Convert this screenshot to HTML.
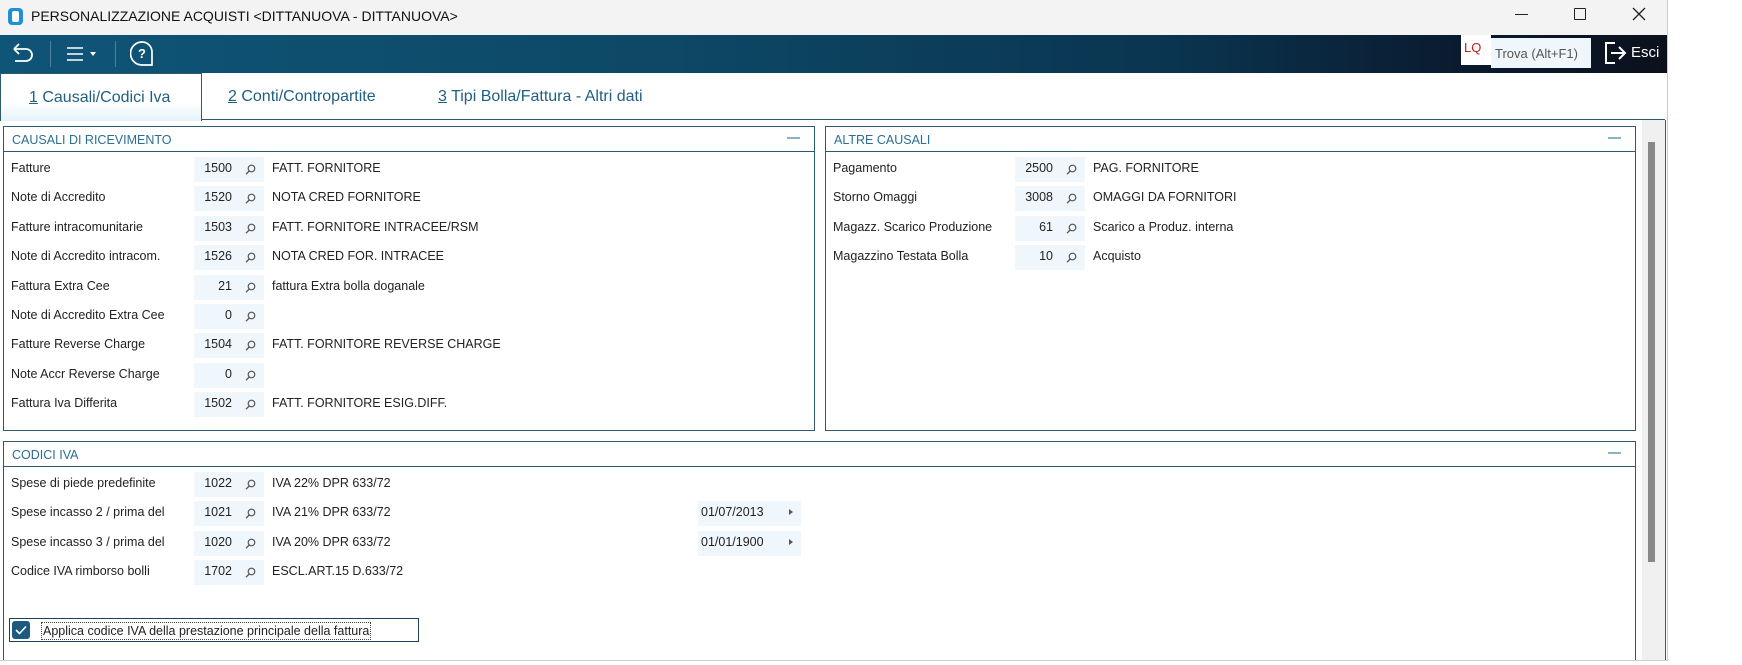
<!DOCTYPE html>
<html><head><meta charset="utf-8"><style>
*{margin:0;padding:0;box-sizing:border-box}
body{width:1742px;height:665px;background:#fff;font-family:"Liberation Sans",sans-serif;font-size:13px;color:#222;position:relative;overflow:hidden}
.abs{position:absolute}
.win{left:0;top:0;width:1668px;height:661px;border-right:1px solid #ccc;border-bottom:1px solid #ccc;background:#fff;overflow:hidden}
.title{left:0;top:0;width:1668px;height:35px;background:#f3f3f3}
.tb{left:0;top:35px;width:1668px;height:38px;background:linear-gradient(90deg,#0f5578 0%,#0d4866 40%,#0a3550 70%,#0a1a2e 88%,#0b111c 100%)}
.panel{border:1px solid #2d5a73;background:#fff}
.ph{position:absolute;left:0;top:0;right:0;height:25px;border-bottom:1px solid #2d5a73;color:#2a6f92;font-size:12.5px;padding:6px 0 0 8px}
.ph i{position:absolute;right:14px;top:10px;width:13px;height:2px;background:#8ab3c7}
.lbl{position:absolute;font-size:12.5px}
.fld{position:absolute;width:70px;height:25px;background:#f0f7fc;text-align:right;padding:4px 32px 0 0;font-size:12.5px}
.fld svg{position:absolute;right:8px;top:7px}
.desc{position:absolute;font-size:12.5px}
.tab{top:73px;height:47px;font-size:16px;color:#1f5f80;padding-top:15px}
.tab u{text-decoration:underline}
</style></head><body>
<div class="abs win">
<div class="abs title">
 <div class="abs" style="left:8px;top:8px;width:15px;height:17px;background:#1f8fd6;border-radius:4px"><div style="margin:3px 0 0 4px;width:7px;height:11px;background:#fff;border-radius:2px"></div></div>
 <div class="abs" style="left:31px;top:8px;font-size:14px;color:#111">PERSONALIZZAZIONE ACQUISTI &lt;DITTANUOVA - DITTANUOVA&gt;</div>
 <div class="abs" style="left:1515px;top:14px;width:13px;height:1px;background:#222"></div>
 <div class="abs" style="left:1574px;top:8px;width:12px;height:12px;border:1.3px solid #222;border-radius:1px"></div>
 <svg class="abs" style="left:1632px;top:7px" width="14" height="14"><path d="M1 1L13 13M13 1L1 13" stroke="#222" stroke-width="1.3"/></svg>
</div>
<div class="abs tb">
 <svg class="abs" style="left:10px;top:7px" width="26" height="24"><path d="M4 7h12a6 6 0 0 1 0 12H5M4 7l5-5M4 7l5 5" fill="none" stroke="#fff" stroke-width="1.8"/></svg>
 <div class="abs" style="left:50px;top:6px;width:1px;height:26px;background:#4f7f9a"></div>
 <svg class="abs" style="left:66px;top:11px" width="36" height="16"><path d="M1 2h16M1 8h16M1 14h16" stroke="#fff" stroke-width="1.6"/><path d="M24 6h6l-3 4z" fill="#fff"/></svg>
 <div class="abs" style="left:115px;top:6px;width:1px;height:26px;background:#4f7f9a"></div>
 <svg class="abs" style="left:130px;top:5px" width="26" height="28"><path d="M12 2a10 10 0 0 1 10 10v13H12A10 10 0 0 1 12 2z" fill="none" stroke="#fff" stroke-width="1.7"/><text x="8" y="18" font-size="13" fill="#fff" font-family="Liberation Sans" font-weight="bold">?</text></svg>
 <div class="abs" style="left:1461px;top:0;width:30px;height:30px;background:#fff;color:#c41d1d;font-size:13px;padding:5px 0 0 3px">LQ</div>
 <div class="abs" style="left:1491px;top:3px;width:100px;height:30px;background:#f0f7fc;color:#555;font-size:13px;padding:8px 0 0 4px">Trova (Alt+F1)</div>
 <svg class="abs" style="left:1603px;top:5px" width="24" height="26"><path d="M12 3H3v20h9" fill="none" stroke="#fff" stroke-width="2"/><path d="M8 13h14M16 7l6 6-6 6" fill="none" stroke="#fff" stroke-width="2"/></svg>
 <div class="abs" style="left:1631px;top:9px;color:#fff;font-size:15px">Esci</div>
</div>
<div class="abs" style="left:0;top:119px;width:1665px;height:1px;background:#2d5a73"></div>
<div class="abs tab" style="left:0;width:202px;border:1px solid #2d5a73;border-bottom:none;background:linear-gradient(#fff 60%,#e6f2fa);padding-left:28px;height:48px"><u>1</u> Causali/Codici Iva</div>
<div class="abs tab" style="left:228px"><u>2</u> Conti/Contropartite</div>
<div class="abs tab" style="left:438px"><u>3</u> Tipi Bolla/Fattura - Altri dati</div>
<div class="abs" style="left:1642px;top:120px;width:23px;height:540px;background:#f0f0f0"></div>
<div class="abs" style="left:1648px;top:142px;width:7px;height:420px;background:#888"></div>
<div class="abs" style="left:1665px;top:120px;width:1px;height:540px;background:#2d5a73"></div>

<div class="abs panel" style="left:3px;top:126px;width:812px;height:305px"><div class="ph">CAUSALI DI RICEVIMENTO<i></i></div></div>
<div class="abs panel" style="left:825px;top:126px;width:811px;height:305px"><div class="ph">ALTRE CAUSALI<i></i></div></div>
<div class="abs panel" style="left:3px;top:441px;width:1633px;height:230px"><div class="ph">CODICI IVA<i></i></div></div>

<div id="rows"></div>
<div class="abs" style="left:9px;top:618px;width:410px;height:24px;border:1px solid #1f3f55"></div>
<div class="abs" style="left:12px;top:621px;width:18px;height:18px;background:#1d5a80;border-radius:3px"><svg width="18" height="18"><path d="M4 9l3.5 3.5L14 5.5" fill="none" stroke="#fff" stroke-width="1.6"/></svg></div>
<div class="abs" style="left:41px;top:622px;font-size:12.5px;border:1px dotted #444;padding:1px 1px">Applica codice IVA della prestazione principale della fattura</div>
</div>
<script>
const mag='<svg width="11" height="11"><circle cx="6.5" cy="4.5" r="3.3" fill="none" stroke="#555" stroke-width="1.2"/><path d="M4.2 7L1 10.2" stroke="#555" stroke-width="1.3"/></svg>';
let h='';
function row(x,fx,dx,y,l,n,d){h+=`<div class="lbl" style="left:${x}px;top:${y-8}px">${l}</div><div class="fld" style="left:${fx}px;top:${y-12}px">${n}${mag}</div><div class="desc" style="left:${dx}px;top:${y-8}px">${d}</div>`;}
const A=[["Fatture","1500","FATT. FORNITORE"],["Note di Accredito","1520","NOTA CRED FORNITORE"],["Fatture intracomunitarie","1503","FATT. FORNITORE INTRACEE/RSM"],["Note di Accredito intracom.","1526","NOTA CRED FOR. INTRACEE"],["Fattura Extra Cee","21","fattura Extra bolla doganale"],["Note di Accredito Extra Cee","0",""],["Fatture Reverse Charge","1504","FATT. FORNITORE REVERSE CHARGE"],["Note Accr Reverse Charge","0",""],["Fattura Iva Differita","1502","FATT. FORNITORE ESIG.DIFF."]];
A.forEach((r,i)=>row(11,194,272,169+i*29.4,...r));
const B=[["Pagamento","2500","PAG. FORNITORE"],["Storno Omaggi","3008","OMAGGI DA FORNITORI"],["Magazz. Scarico Produzione","61","Scarico a Produz. interna"],["Magazzino Testata Bolla","10","Acquisto"]];
B.forEach((r,i)=>row(833,1015,1093,169+i*29.4,...r));
const C=[["Spese di piede predefinite","1022","IVA 22% DPR 633/72"],["Spese incasso 2 / prima del","1021","IVA 21% DPR 633/72"],["Spese incasso 3 / prima del","1020","IVA 20% DPR 633/72"],["Codice IVA rimborso bolli","1702","ESCL.ART.15 D.633/72"]];
C.forEach((r,i)=>row(11,194,272,484+i*29.4,...r));
[["01/07/2013",513.4],["01/01/1900",542.8]].forEach(([d,y])=>{h+=`<div class="fld" style="left:698px;top:${y-12}px;width:103px;text-align:left;padding:4px 0 0 3px">${d}<span style="position:absolute;left:91px;top:8px;border-left:4px solid #555;border-top:3.5px solid transparent;border-bottom:3.5px solid transparent"></span></div>`});
document.getElementById('rows').outerHTML=h;
</script>
</body></html>
